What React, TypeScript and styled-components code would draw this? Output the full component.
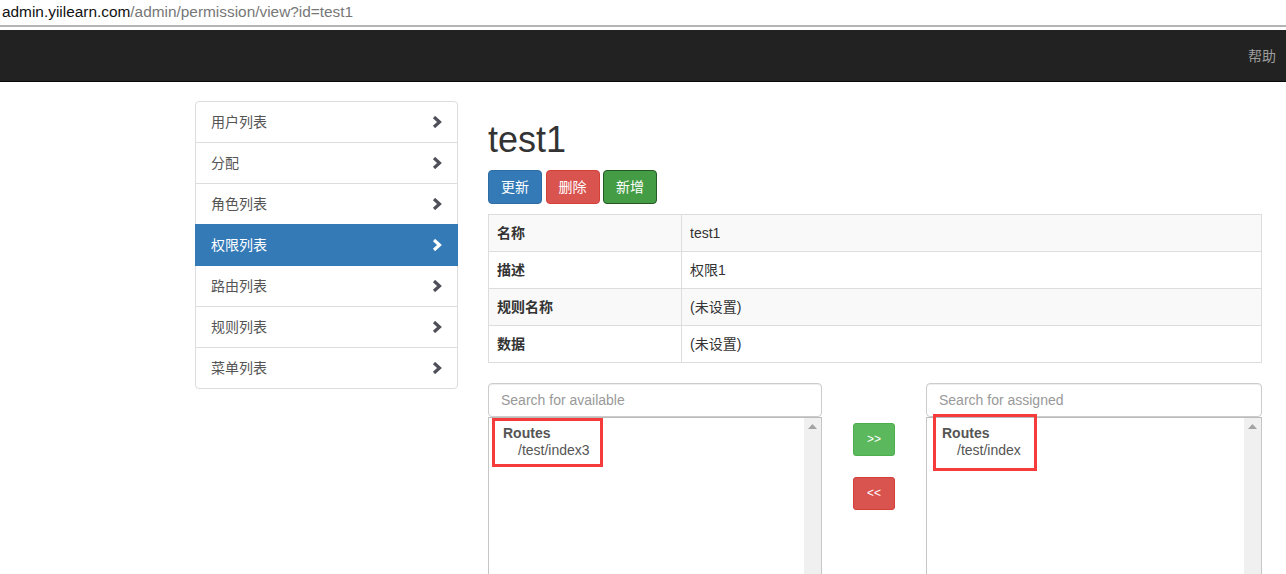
import React from "react";
import styled, { createGlobalStyle } from "styled-components";

const Global = createGlobalStyle`
  html, body { margin: 0; padding: 0; overflow: hidden; background: #fff; }
  body {
    font-family: "Liberation Sans", "Noto Sans CJK SC", sans-serif;
    font-size: 14px;
    line-height: 20px;
    color: #333;
  }
  * { box-sizing: border-box; }
`;

const Page = styled.div`
  width: 1286px;
`;

const AddressBar = styled.div`
  height: 27px;
  padding: 0 0 2px 2px;
  display: flex;
  align-items: center;
  font-size: 15.4px;
  color: #777;
  white-space: nowrap;
  border-bottom: 2px solid #b4b4b4;
`;

const Host = styled.span`
  color: #111;
`;

const Spacer = styled.div`
  height: 3px;
`;

const Navbar = styled.div`
  height: 52px;
  background: #222;
  border-bottom: 1px solid #080808;
  display: flex;
  justify-content: flex-end;
  align-items: center;
  padding-right: 10px;
`;

const NavLink = styled.span`
  color: #9d9d9d;
  font-size: 14px;
`;

const Body = styled.div`
  display: flex;
  align-items: flex-start;
  padding-left: 195px;
  padding-top: 19px;
  gap: 30px;
`;

const SideList = styled.div`
  width: 263px;
  display: flex;
  flex-direction: column;
`;

const SideItem = styled.div<{ $active?: boolean }>`
  height: 42px;
  margin-bottom: -1px;
  padding: 10px 15px;
  display: flex;
  align-items: center;
  justify-content: space-between;
  border: 1px solid ${(p) => (p.$active ? "#337ab7" : "#ddd")};
  background: ${(p) => (p.$active ? "#337ab7" : "#fff")};
  color: ${(p) => (p.$active ? "#fff" : "#555")};
  position: relative;
  z-index: ${(p) => (p.$active ? 2 : 1)};
  &:first-child { border-radius: 4px 4px 0 0; }
  &:last-child { border-radius: 0 0 4px 4px; margin-bottom: 0; }
`;

const Main = styled.div`
  width: 774px;
  display: flex;
  flex-direction: column;
`;

const Title = styled.h1`
  margin: 19px 0 10px;
  font-size: 36px;
  font-weight: 500;
  line-height: 39.6px;
  color: #333;
`;

const ButtonRow = styled.div`
  display: flex;
  gap: 3.5px;
  margin-bottom: 10px;
`;

const Btn = styled.button<{ $bg: string; $border: string }>`
  width: 54px;
  height: 34px;
  padding: 6px 12px;
  border-radius: 4px;
  border: 1px solid ${(p) => p.$border};
  background: ${(p) => p.$bg};
  color: #fff;
  font-family: inherit;
  font-size: 14px;
  line-height: 20px;
`;

const Table = styled.table`
  width: 774px;
  border-collapse: collapse;
  table-layout: fixed;
  margin-bottom: 20px;
`;

const Row = styled.tr<{ $striped?: boolean }>`
  background: ${(p) => (p.$striped ? "#f9f9f9" : "#fff")};
`;

const Th = styled.th`
  text-align: left;
  font-weight: bold;
  padding: 8px;
  line-height: 20px;
  border: 1px solid #ddd;
`;

const Td = styled.td`
  padding: 8px;
  line-height: 20px;
  border: 1px solid #ddd;
`;

const Transfer = styled.div`
  display: flex;
  align-items: flex-start;
`;

const Column = styled.div<{ $w: number }>`
  width: ${(p) => p.$w}px;
  display: flex;
  flex-direction: column;
`;

const SearchInput = styled.input`
  height: 34px;
  width: 100%;
  padding: 6px 12px;
  border: 1px solid #ccc;
  border-radius: 4px;
  font-family: inherit;
  font-size: 14px;
  color: #555;
  box-shadow: inset 0 1px 1px rgba(0, 0, 0, 0.075);
  &::placeholder { color: #999; }
`;

const ListBox = styled.div<{ $pl: number }>`
  position: relative;
  height: 170px;
  border: 1px solid #c6c6c6;
  border-top-color: #bbb;
  background: #fff;
  padding: 7px 0 0 ${(p) => p.$pl}px;
  display: flex;
  flex-direction: column;
  color: #555;
`;

const GroupLabel = styled.div`
  font-weight: bold;
  font-size: 14px;
  line-height: 16px;
`;

const Option = styled.div`
  padding-left: 15px;
  font-size: 14px;
  line-height: 18px;
`;

const ScrollTrack = styled.div`
  position: absolute;
  top: 0;
  right: 0;
  bottom: 0;
  width: 17px;
  background: #f0f0f0;
  display: flex;
  justify-content: center;
  padding-top: 6px;
`;

const Mark = styled.div<{ $l: number; $t: number; $w: number; $h: number }>`
  position: absolute;
  left: ${(p) => p.$l}px;
  top: ${(p) => p.$t}px;
  width: ${(p) => p.$w}px;
  height: ${(p) => p.$h}px;
  border: 3px solid #f63b3b;
  pointer-events: none;
`;

const Middle = styled.div`
  width: 104px;
  display: flex;
  flex-direction: column;
  align-items: center;
  padding-top: 40px;
  gap: 21px;
`;

const MoveBtn = styled.button<{ $bg: string; $border: string }>`
  width: 42px;
  height: 33px;
  border-radius: 3px;
  border: 1px solid ${(p) => p.$border};
  background: ${(p) => p.$bg};
  color: #fff;
  font-family: inherit;
  font-size: 12px;
  padding: 0;
`;

const Chevron = ({ color }: { color: string }) => (
  <svg width="10" height="12" viewBox="0 0 10 12">
    <path d="M2 1 L7.5 6 L2 11" fill="none" stroke={color} strokeWidth="3.2" strokeLinejoin="miter" />
  </svg>
);

const ScrollUp = () => (
  <svg width="9" height="5" viewBox="0 0 9 5">
    <path d="M0 5 L4.5 0 L9 5 Z" fill="#a3a3a3" />
  </svg>
);

const menu = ["用户列表", "分配", "角色列表", "权限列表", "路由列表", "规则列表", "菜单列表"];
const details: [string, string][] = [
  ["名称", "test1"],
  ["描述", "权限1"],
  ["规则名称", "(未设置)"],
  ["数据", "(未设置)"],
];

export default function App() {
  return (
    <Page>
      <Global />
      <AddressBar>
        <Host>admin.yiilearn.com</Host>/admin/permission/view?id=test1
      </AddressBar>
      <Spacer />
      <Navbar>
        <NavLink>帮助</NavLink>
      </Navbar>
      <Body>
        <SideList>
          {menu.map((m) => (
            <SideItem key={m} $active={m === "权限列表"}>
              <span>{m}</span>
              <Chevron color={m === "权限列表" ? "#fff" : "#4f4f5a"} />
            </SideItem>
          ))}
        </SideList>
        <Main>
          <Title>test1</Title>
          <ButtonRow>
            <Btn $bg="#337ab7" $border="#2e6da4">更新</Btn>
            <Btn $bg="#d9534f" $border="#d43f3a">删除</Btn>
            <Btn $bg="#449d44" $border="#255625">新增</Btn>
          </ButtonRow>
          <Table>
            <colgroup>
              <col style={{ width: 193 }} />
              <col />
            </colgroup>
            <tbody>
              {details.map(([k, v], i) => (
                <Row key={k} $striped={i % 2 === 0}>
                  <Th>{k}</Th>
                  <Td>{v}</Td>
                </Row>
              ))}
            </tbody>
          </Table>
          <Transfer>
            <Column $w={334}>
              <SearchInput placeholder="Search for available" />
              <ListBox $pl={14}>
                <GroupLabel>Routes</GroupLabel>
                <Option>/test/index3</Option>
                <ScrollTrack>
                  <ScrollUp />
                </ScrollTrack>
                <Mark $l={3} $t={0} $w={111} $h={49} />
              </ListBox>
            </Column>
            <Middle>
              <MoveBtn $bg="#5cb85c" $border="#4cae4c">&gt;&gt;</MoveBtn>
              <MoveBtn $bg="#d9534f" $border="#d43f3a">&lt;&lt;</MoveBtn>
            </Middle>
            <Column $w={336}>
              <SearchInput placeholder="Search for assigned" />
              <ListBox $pl={15}>
                <GroupLabel>Routes</GroupLabel>
                <Option>/test/index</Option>
                <ScrollTrack>
                  <ScrollUp />
                </ScrollTrack>
                <Mark $l={6} $t={-4} $w={104} $h={57} />
              </ListBox>
            </Column>
          </Transfer>
        </Main>
      </Body>
    </Page>
  );
}
